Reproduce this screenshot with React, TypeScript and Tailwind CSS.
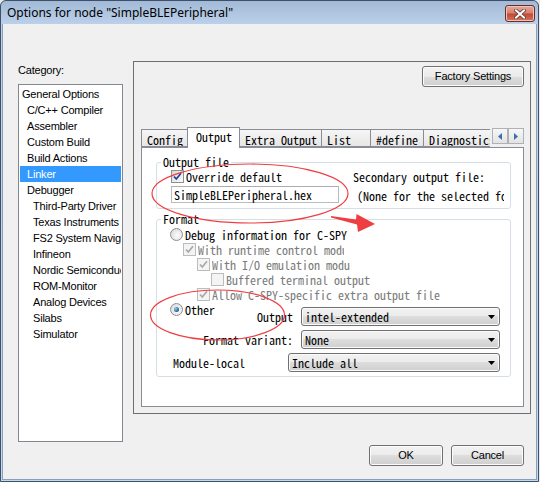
import React from "react";

const MONO = "font-['Noto_Sans_Mono_CJK_SC','Liberation_Mono',monospace] text-[12px] leading-[12px]";
const SANS = "font-['Liberation_Sans',Arial,sans-serif] text-[11px] tracking-[-0.2px]";
const BTN =
  "flex items-center justify-center rounded-[3px] border border-[#707070] bg-[linear-gradient(#f2f2f2,#ebebeb_50%,#dddddd_50%,#cfcfcf)] shadow-[inset_0_0_0_1px_#fcfcfc] text-black";

type Cat = { label: string; level: number; selected?: boolean };

const categories: Cat[] = [
  { label: "General Options", level: 0 },
  { label: "C/C++ Compiler", level: 1 },
  { label: "Assembler", level: 1 },
  { label: "Custom Build", level: 1 },
  { label: "Build Actions", level: 1 },
  { label: "Linker", level: 1, selected: true },
  { label: "Debugger", level: 1 },
  { label: "Third-Party Driver", level: 2 },
  { label: "Texas Instruments", level: 2 },
  { label: "FS2 System Navigator", level: 2 },
  { label: "Infineon", level: 2 },
  { label: "Nordic Semiconductor", level: 2 },
  { label: "ROM-Monitor", level: 2 },
  { label: "Analog Devices", level: 2 },
  { label: "Silabs", level: 2 },
  { label: "Simulator", level: 2 },
];

const tabs = [
  { label: "Config", w: "w-[47px]" },
  { label: "Output", w: "w-[53px]", active: true },
  { label: "Extra Output", w: "w-[83px]" },
  { label: "List", w: "w-[50px]" },
  { label: "#define", w: "w-[54px]" },
  { label: "Diagnostics", w: "w-[80px]" },
];

function Check({ checked, disabled }: { checked?: boolean; disabled?: boolean }) {
  return (
    <span
      className={`flex h-[13px] w-[13px] shrink-0 items-center justify-center border ${
        disabled ? "border-[#bcbcbc] bg-[#f4f4f4]" : "border-[#8e8f8f] bg-[linear-gradient(135deg,#d6d8db,#fbfbfb)]"
      }`}
    >
      {checked && (
        <svg width="11" height="11" viewBox="0 0 11 11">
          <path
            d="M2 5.5 L4.3 8 L9 2.3"
            fill="none"
            stroke={disabled ? "#a8a8a8" : "#22409a"}
            strokeWidth="1.7"
          />
        </svg>
      )}
    </span>
  );
}

function Radio({ checked }: { checked?: boolean }) {
  return (
    <span className="flex h-[13px] w-[13px] shrink-0 items-center justify-center rounded-full border border-[#8e8f8f] bg-[radial-gradient(circle_at_60%_60%,#fdfdfd,#d4d4d4)]">
      {checked && (
        <span className="h-[5px] w-[5px] rounded-full bg-[radial-gradient(circle_at_35%_35%,#8dd0f5,#1d5a8e_70%)]" />
      )}
    </span>
  );
}

function Select({ value, w }: { value: string; w: string }) {
  return (
    <div
      className={`flex h-[19px] shrink-0 items-center rounded-[3px] border border-[#707070] bg-[linear-gradient(#f2f2f2,#ebebeb_50%,#dddddd_50%,#cfcfcf)] pl-[3px] pr-[4px] shadow-[inset_0_0_0_1px_#fbfbfb] ${w}`}
    >
      <span className={`flex-1 whitespace-nowrap ${MONO}`}>{value}</span>
      <svg width="7" height="4" viewBox="0 0 7 4">
        <path d="M0 0h7L3.5 4z" fill="#000" />
      </svg>
    </div>
  );
}

function Group({ title, children }: { title: string; children: React.ReactNode }) {
  return (
    <fieldset className="rounded-[3px] border border-[#d5dfe5] p-0">
      <legend className={`ml-[4px] px-[2px] ${MONO}`}>{title}</legend>
      {children}
    </fieldset>
  );
}

export default function App() {
  return (
    <div className="relative h-[482px] w-[540px] overflow-hidden bg-[#e9e9e9]">
      <div className="flex h-[482px] w-[539px] flex-col rounded-t-[6px] border border-[#3d5068] bg-[linear-gradient(#a2bad7,#bcd1ea_24px,#c4d8ee)]">
        {/* title bar */}
        <div className="flex h-[23px] items-start pl-[6px] pr-[3px] pt-[4px]">
          <span className="flex-1 pt-[1px] font-['Noto_Sans',sans-serif] text-[12px] leading-[14px] text-black">
            Options for node "SimpleBLEPeripheral"
          </span>
          <div className="flex h-[17px] w-[30px] items-center justify-center rounded-[3px] border border-[#6b2b28] bg-[linear-gradient(#e8a99c,#d7826f_45%,#c24a32_55%,#d2765c)] shadow-[inset_0_0_0_1px_#eec3b8]">
            <svg width="12" height="10" viewBox="0 0 12 10">
              <path d="M2 1.5 L10 8.5 M10 1.5 L2 8.5" stroke="#5a3a3a" strokeWidth="3.6" strokeLinecap="square" />
              <path d="M2 1.5 L10 8.5 M10 1.5 L2 8.5" stroke="#ffffff" strokeWidth="2" strokeLinecap="square" />
            </svg>
          </div>
        </div>

        {/* client area */}
        <div className="mx-[1px] mb-[1px] flex-1 border-x border-b border-[#86a0be] bg-[#f0f0f0]">
          <div className="flex gap-[10px] pl-[15px] pt-[37px]">
            {/* category column */}
            <div className="w-[105px]">
              <div className={`mt-[3px] mb-[7px] h-[13px] leading-[13px] ${SANS}`}>Category:</div>
              <div className="h-[358px] overflow-hidden border border-[#828790] bg-white px-[1px] pt-[1px]">
                {categories.map((c) => (
                  <div
                    key={c.label}
                    className={`h-[16px] overflow-hidden whitespace-nowrap leading-[16px] ${SANS} ${
                      c.level === 0 ? "pl-[2px]" : c.level === 1 ? "pl-[7px]" : "pl-[13px]"
                    } ${c.selected ? "bg-[#3399ff] text-white" : "text-black"}`}
                  >
                    {c.label}
                  </div>
                ))}
              </div>
            </div>

            {/* options column */}
            <div className="w-[398px]">
              <div className="flex h-[353px] flex-col border border-[#6f6f6f] pl-[7px] pr-[6px] pt-[4px] pb-[6px]">
                <div className="flex justify-end">
                  <div className={`${BTN} h-[21px] w-[102px] ${SANS}`}>Factory Settings</div>
                </div>

                {/* tab strip */}
                <div className="relative z-10 mt-[40px] flex h-[21px]">
                  <div className="flex w-[349px] overflow-hidden pl-[1px]">
                    {tabs.map((t) =>
                      t.active ? (
                        <div
                          key={t.label}
                          className={`-ml-[1px] h-[21px] shrink-0 border-x border-t border-[#898c95] bg-white pl-[8px] pt-[3px] ${t.w} ${MONO}`}
                        >
                          {t.label}
                        </div>
                      ) : (
                        <div
                          key={t.label}
                          className={`-ml-[1px] mt-[2px] h-[18px] shrink-0 overflow-hidden whitespace-nowrap border border-[#898c95] bg-[linear-gradient(#f6f6f6,#e6e6e6)] pl-[5px] pt-[4px] ${t.w} ${MONO}`}
                        >
                          {t.label}
                        </div>
                      )
                    )}
                  </div>
                  <div className="ml-[2px] mt-[1px] flex h-[16px]">
                    {["M4 0 L0 3.5 L4 7z", "M0 0 L4 3.5 L0 7z"].map((d) => (
                      <div
                        key={d}
                        className="flex h-[16px] w-[16px] items-center justify-center border border-[#adb2b5] bg-[linear-gradient(#f7f7f7,#e3e3e3)]"
                      >
                        <svg width="4" height="7" viewBox="0 0 4 7">
                          <path d={d} fill="#3c6fb4" />
                        </svg>
                      </div>
                    ))}
                  </div>
                </div>

                {/* tab panel */}
                <div className="-mt-[1px] flex-1 border border-[#898c95] bg-white pl-[14px] pr-[12px] pt-[8px]">
                  <Group title="Output file">
                    <div className="flex pl-[14px] pt-[2px] pb-[5px]">
                      <div className="w-[168px] shrink-0">
                        <div className="flex h-[13px] items-center">
                          <Check checked />
                          <span className={`ml-[2px] whitespace-nowrap ${MONO}`}>Override default</span>
                        </div>
                        <div
                          className={`mt-[3px] flex h-[17px] items-center whitespace-nowrap border border-[#b7bcc3] border-t-[#abadb3] pl-[2px] ${MONO}`}
                        >
                          SimpleBLEPeripheral.hex
                        </div>
                      </div>
                      <div className="ml-[14px] w-[151px] shrink-0 overflow-hidden whitespace-nowrap">
                        <div className={`flex h-[13px] items-center ${MONO}`}>Secondary output file:</div>
                        <div className={`mt-[6px] flex h-[13px] items-center pl-[4px] ${MONO}`}>
                          (None for the selected format)
                        </div>
                      </div>
                    </div>
                  </Group>

                  <div className="mt-[4px]">
                    <Group title="Format">
                      <div className="flex flex-col gap-[2px] pl-[13px] pr-[10px] pt-[3px] pb-[4px]">
                        <div className="flex h-[13px] items-center">
                          <Radio />
                          <span className={`ml-[2px] whitespace-nowrap ${MONO}`}>Debug information for C-SPY</span>
                        </div>
                        <div className="flex h-[13px] items-center pl-[13px]">
                          <Check checked disabled />
                          <span className={`ml-[2px] w-[146px] overflow-hidden whitespace-nowrap text-[#7a7a7a] ${MONO}`}>
                            With runtime control modules
                          </span>
                        </div>
                        <div className="flex h-[13px] items-center pl-[27px]">
                          <Check checked disabled />
                          <span className={`ml-[2px] w-[140px] overflow-hidden whitespace-nowrap text-[#7a7a7a] ${MONO}`}>
                            With I/O emulation modules
                          </span>
                        </div>
                        <div className="flex h-[13px] items-center pl-[41px]">
                          <Check disabled />
                          <span className={`ml-[2px] whitespace-nowrap text-[#7a7a7a] ${MONO}`}>Buffered terminal output</span>
                        </div>
                        <div className="flex h-[13px] items-center pl-[27px]">
                          <Check checked disabled />
                          <span className={`ml-[2px] whitespace-nowrap text-[#7a7a7a] ${MONO}`}>
                            Allow C-SPY-specific extra output file
                          </span>
                        </div>
                        <div className="flex items-start">
                          <div className="flex h-[13px] items-center">
                            <Radio checked />
                            <span className={`ml-[2px] ${MONO}`}>Other</span>
                          </div>
                          <div className="ml-auto mt-[4px] flex items-center gap-[8px]">
                            <span className={`whitespace-nowrap ${MONO}`}>Output</span>
                            <Select value="intel-extended" w="w-[199px]" />
                          </div>
                        </div>
                        <div className="mt-[2px] flex items-center justify-end gap-[8px]">
                          <span className={`whitespace-nowrap ${MONO}`}>Format variant:</span>
                          <Select value="None" w="w-[199px]" />
                        </div>
                        <div className="mt-[2px] flex items-center justify-between pl-[3px]">
                          <span className={`whitespace-nowrap ${MONO}`}>Module-local</span>
                          <Select value="Include all" w="w-[212px]" />
                        </div>
                      </div>
                    </Group>
                  </div>
                </div>
              </div>

              {/* dialog buttons */}
              <div className="mt-[31px] flex justify-end gap-[8px] pr-[7px]">
                <div className={`${BTN} h-[21px] w-[74px] ${SANS}`}>OK</div>
                <div className={`${BTN} h-[21px] w-[73px] ${SANS}`}>Cancel</div>
              </div>
            </div>
          </div>
        </div>
      </div>

      {/* red annotations */}
      <svg className="pointer-events-none absolute left-0 top-0" width="540" height="482" viewBox="0 0 540 482">
        <ellipse cx="250" cy="193.5" rx="98" ry="29.5" fill="none" stroke="#ef3e42" strokeWidth="1.2" />
        <ellipse cx="217.5" cy="315" rx="67" ry="25" fill="none" stroke="#ef3e42" strokeWidth="1.2" />
        <polygon points="331,216 356,219.5 356.5,214 375,224 358,232 357,224.5 331,217.5" fill="#ef3e42" />
      </svg>
    </div>
  );
}
